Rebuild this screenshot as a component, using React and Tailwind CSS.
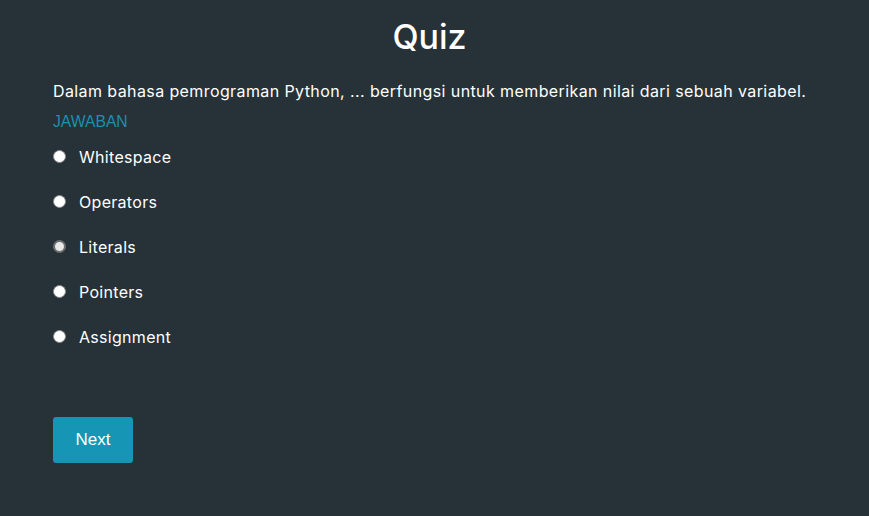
import React, { useState } from 'react'

const options = ['Whitespace', 'Operators', 'Literals', 'Pointers', 'Assignment']

const App = () => {
    const [selected, setSelected] = useState(null)
    const hovered = 'Literals'

    return (
        <div className="min-h-screen w-full bg-[#263238] text-white font-['Inter',sans-serif]">
            <div className="px-[53px] pt-[14px]">
                <h1 className="pr-[10px] text-center text-[34px] leading-[46px] font-medium">Quiz</h1>
                <p className="mt-[19px] text-[16px] leading-[24px] tracking-[0.4px]">
                    Dalam bahasa pemrograman Python, ... berfungsi untuk memberikan nilai dari sebuah variabel.
                </p>
                <div className="mt-[10px] text-[15.7px] leading-[18px] text-[#1c8fae] font-['Liberation_Sans',sans-serif]">
                    JAWABAN
                </div>
                <div className="mt-[3px] flex flex-col">
                    {options.map((opt) => (
                        <label
                            key={opt}
                            onClick={() => setSelected(opt)}
                            className="flex items-center h-[45px] cursor-pointer"
                        >
                            <span
                                className={
                                    opt === hovered
                                        ? 'w-[13px] h-[13px] rounded-full border-2 border-[#6f6f6f] bg-[#e8e8e8]'
                                        : 'w-[13px] h-[13px] rounded-full border border-[#8a8a8a] bg-white'
                                }
                            />
                            <span className="ml-[13px] text-[16px] tracking-[0.3px]">{opt}</span>
                        </label>
                    ))}
                </div>
                <button className="mt-[58px] w-[80px] h-[46px] rounded-[3px] bg-[#1795b5] text-[17px] text-white font-['Liberation_Sans',sans-serif]">
                    Next
                </button>
            </div>
        </div>
    )
}

export default App
